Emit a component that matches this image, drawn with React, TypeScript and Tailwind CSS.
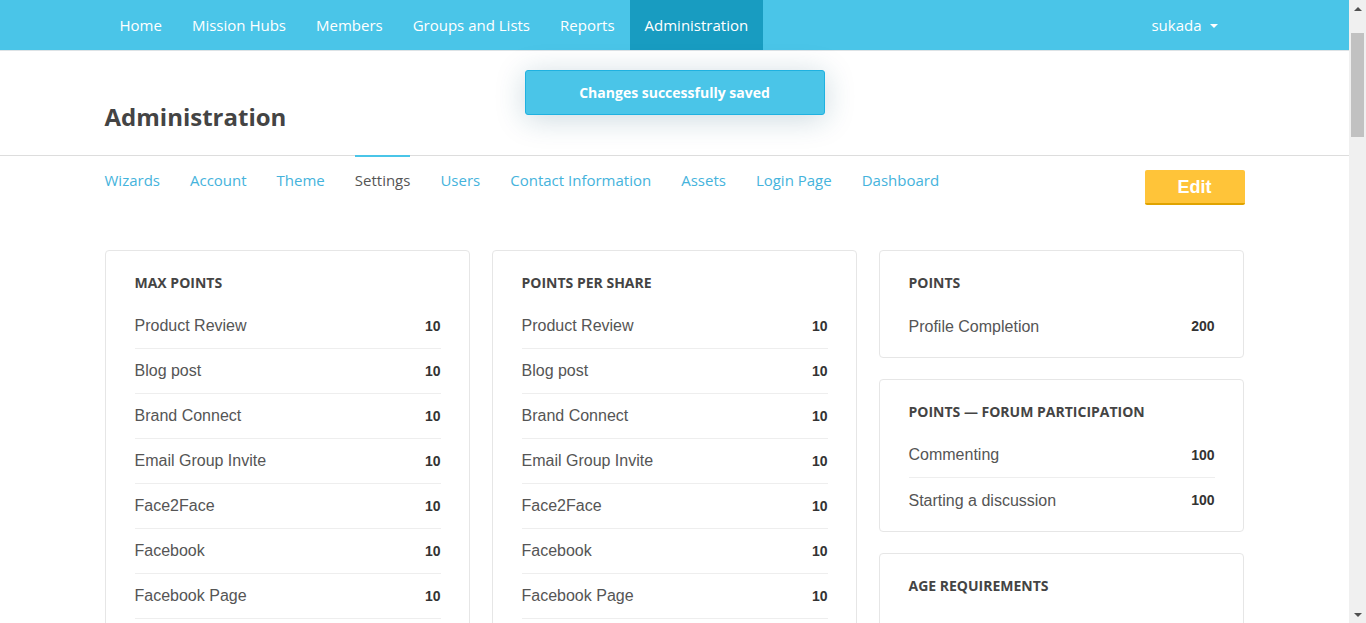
import React from "react";

const navItems = ["Home", "Mission Hubs", "Members", "Groups and Lists", "Reports", "Administration"];
const tabs = ["Wizards", "Account", "Theme", "Settings", "Users", "Contact Information", "Assets", "Login Page", "Dashboard"];

const shareRows: [string, number][] = [
  ["Product Review", 10],
  ["Blog post", 10],
  ["Brand Connect", 10],
  ["Email Group Invite", 10],
  ["Face2Face", 10],
  ["Facebook", 10],
  ["Facebook Page", 10],
  ["Instagram", 10],
  ["LinkedIn", 10],
  ["Pinterest", 10],
  ["Twitter", 10],
];

interface CardProps {
  title: string;
  rows: [string, number | string][];
}

function PointsCard({ title, rows }: CardProps) {
  return (
    <div className="bg-white border border-[#e6e6e6] rounded-[4px] pt-[24px] pl-[29px] pr-[28px] pb-[8px]">
      <h3 className="text-[14px] leading-[16px] font-bold uppercase text-[#444] font-['Open_Sans',sans-serif]">
        {title}
      </h3>
      <ul className="mt-[13px] divide-y divide-[#eeeeee]">
        {rows.map(([label, value]) => (
          <li key={label} className="h-[45px] flex items-center justify-between">
            <span className="text-[16px] text-[#555] font-['Liberation_Sans',Arial,sans-serif]">{label}</span>
            <span className="text-[14px] font-bold text-[#333] font-['Liberation_Sans',Arial,sans-serif]">{value}</span>
          </li>
        ))}
      </ul>
    </div>
  );
}

function Scrollbar() {
  return (
    <div className="w-[17px] h-full bg-[#f0f0f0] flex flex-col items-center shrink-0">
      <div className="h-[17px] flex items-center justify-center">
        <span className="w-0 h-0 border-l-[4px] border-r-[4px] border-b-[4px] border-l-transparent border-r-transparent border-b-[#505050]" />
      </div>
      <div className="mt-[16px] w-[13px] h-[104px] bg-[#c1c1c1]" />
      <div className="flex-1" />
      <div className="h-[17px] flex items-center justify-center">
        <span className="w-0 h-0 border-l-[4px] border-r-[4px] border-t-[4px] border-l-transparent border-r-transparent border-t-[#505050]" />
      </div>
    </div>
  );
}

export default function App() {
  return (
    <div className="h-screen flex bg-white font-['Open_Sans',sans-serif] overflow-hidden">
      <div className="flex-1 relative overflow-hidden">
        <nav className="h-[51px] bg-[#4ac5e8] border-b border-[#dde3e6]">
          <div className="w-[1140px] mx-auto h-full flex justify-between">
            <ul className="flex h-full">
              {navItems.map((item) => (
                <li
                  key={item}
                  className={`h-full flex items-center px-[15px] text-[15px] text-white ${
                    item === "Administration" ? "bg-[#189cc1]" : ""
                  }`}
                >
                  {item}
                </li>
              ))}
            </ul>
            <div className="h-full flex items-center pl-[15px] pr-[27px] text-[15px] text-white gap-[8px]">
              sukada
              <span className="w-0 h-0 border-l-[4px] border-r-[4px] border-t-[4px] border-l-transparent border-r-transparent border-t-white mt-[2px]" />
            </div>
          </div>
        </nav>

        <div className="absolute top-[70px] left-1/2 -translate-x-1/2 w-[300px] h-[45px] rounded-[3px] bg-[#4ac5e8] border border-[#1fb1e0] flex items-center justify-center text-white text-[14px] font-bold shadow-[0_4px_30px_rgba(20,80,110,0.22)] z-10">
          Changes successfully saved
        </div>

        <header className="border-b border-[#dddddd] h-[105px]">
          <div className="w-[1140px] mx-auto pt-[49px]">
            <h1 className="text-[24px] leading-[33px] font-bold text-[#444]">Administration</h1>
          </div>
        </header>

        <main className="w-[1140px] mx-auto">
          <div className="flex justify-between items-start -mt-px">
            <ul className="flex gap-[30px]">
              {tabs.map((t) => (
                <li
                  key={t}
                  className={`border-t-2 pt-[13px] text-[15px] leading-[20px] ${
                    t === "Settings" ? "border-[#4ac5e8] text-[#555]" : "border-transparent text-[#45b3dc]"
                  }`}
                >
                  {t}
                </li>
              ))}
            </ul>
            <button className="mt-[15px] w-[100px] h-[35px] pt-[2px] bg-[#ffc439] border-b-2 border-[#e0a300] rounded-[2px] text-white text-[18px] font-bold font-['Liberation_Sans',Arial,sans-serif]">
              Edit
            </button>
          </div>

          <div className="grid grid-cols-[365px_365px_365px] gap-[22px] mt-[45px] items-start pb-10">
            <PointsCard title="Max Points" rows={shareRows} />
            <PointsCard title="Points per Share" rows={shareRows} />
            <div className="flex flex-col gap-[21px]">
              <PointsCard title="Points" rows={[["Profile Completion", 200]]} />
              <PointsCard
                title="Points — Forum Participation"
                rows={[
                  ["Commenting", 100],
                  ["Starting a discussion", 100],
                ]}
              />
              <PointsCard title="Age Requirements" rows={[["Minimum Age", 13]]} />
            </div>
          </div>
        </main>
      </div>
      <Scrollbar />
    </div>
  );
}
